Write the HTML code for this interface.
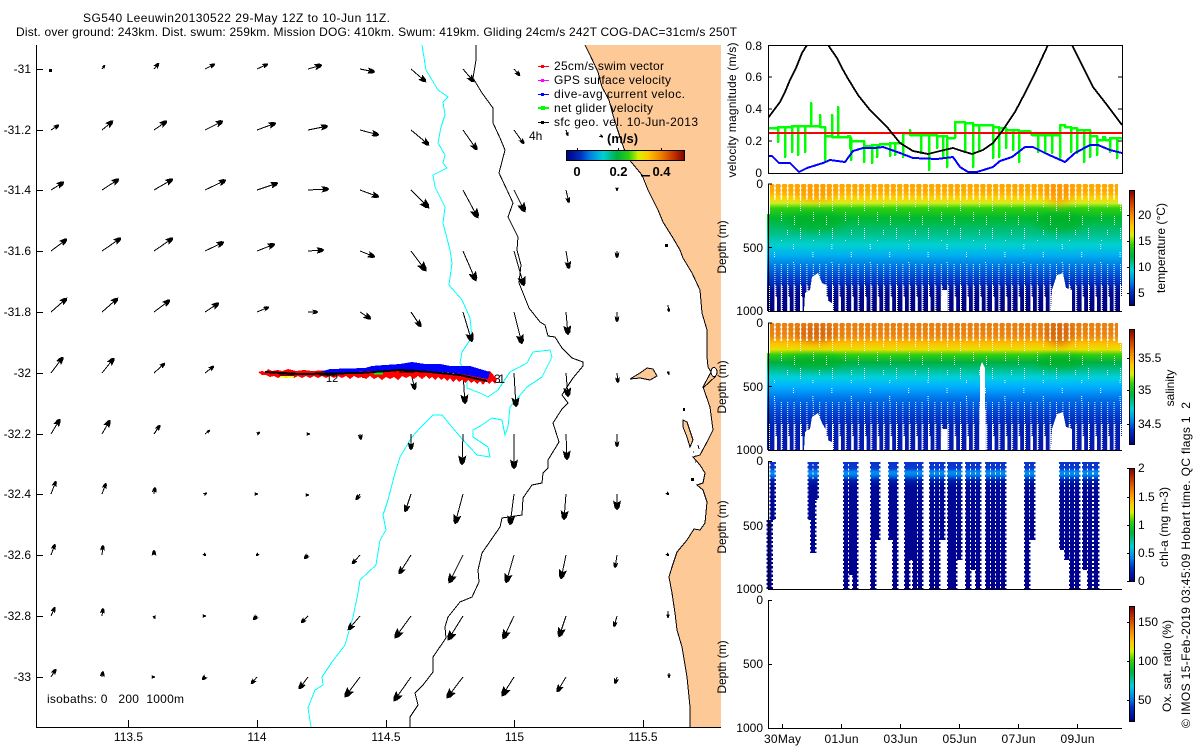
<!DOCTYPE html>
<html lang="en">
<head>
<meta charset="utf-8">
<title>SG540 Leeuwin20130522</title>
<style>
html,body{margin:0;padding:0;background:#fff;width:1200px;height:750px;overflow:hidden}
svg{display:block;shape-rendering:crispEdges}
text{font-family:"Liberation Sans",sans-serif;font-size:12px;fill:#000;white-space:pre}
.r{text-anchor:end}
.m{text-anchor:middle}
.b{font-weight:bold;font-size:14px}
.ln{fill:none;stroke:#000;stroke-width:1}
.ar path{fill:none;stroke:#000;stroke-width:1}
.al path{marker-end:url(#hl)}
.am path{marker-end:url(#hm)}
.as path{marker-end:url(#hs)}
.at path{marker-end:url(#ht)}
</style>
</head>
<body>
<svg width="1200" height="750" viewBox="0 0 1200 750" xmlns="http://www.w3.org/2000/svg">
<defs>
<marker id="hl" markerUnits="userSpaceOnUse" markerWidth="10" markerHeight="8" viewBox="0 0 10 8" refX="9.5" refY="4" orient="auto"><path d="M0 0L7 1.5L10 4L7 6.5L0 8L2.5 4z" fill="#000"/></marker>
<marker id="hm" markerUnits="userSpaceOnUse" markerWidth="8" markerHeight="7" viewBox="0 0 10 8" refX="9.5" refY="4" orient="auto"><path d="M0 0L7 1.5L10 4L7 6.5L0 8L2.5 4z" fill="#000"/></marker>
<marker id="hs" markerUnits="userSpaceOnUse" markerWidth="6" markerHeight="5.5" viewBox="0 0 10 8" refX="9.5" refY="4" orient="auto"><path d="M0 0L7 1.5L10 4L7 6.5L0 8L2.5 4z" fill="#000"/></marker>
<marker id="ht" markerUnits="userSpaceOnUse" markerWidth="4" markerHeight="4" viewBox="0 0 10 8" refX="9.5" refY="4" orient="auto"><path d="M0 0L7 1.5L10 4L7 6.5L0 8L2.5 4z" fill="#000"/></marker>

<linearGradient id="jetH" x1="0" y1="0" x2="1" y2="0">
<stop offset="0" stop-color="#00007f"/><stop offset=".12" stop-color="#0030c0"/><stop offset=".2" stop-color="#0080e8"/><stop offset=".31" stop-color="#00d0d8"/><stop offset=".43" stop-color="#00b040"/><stop offset=".53" stop-color="#30d010"/><stop offset=".61" stop-color="#d8f000"/><stop offset=".69" stop-color="#ffc800"/><stop offset=".8" stop-color="#f08000"/><stop offset=".9" stop-color="#c83800"/><stop offset="1" stop-color="#800000"/>
</linearGradient>
<linearGradient id="jetV" x1="0" y1="1" x2="0" y2="0">
<stop offset="0" stop-color="#00007f"/><stop offset=".12" stop-color="#0030c0"/><stop offset=".2" stop-color="#0080e8"/><stop offset=".31" stop-color="#00d0d8"/><stop offset=".43" stop-color="#00b040"/><stop offset=".53" stop-color="#30d010"/><stop offset=".61" stop-color="#d8f000"/><stop offset=".69" stop-color="#ffc800"/><stop offset=".8" stop-color="#f08000"/><stop offset=".9" stop-color="#c83800"/><stop offset="1" stop-color="#800000"/>
</linearGradient>
<linearGradient id="gT" gradientUnits="userSpaceOnUse" x1="0" y1="184" x2="0" y2="311">
<stop offset="0" stop-color="#ffa800"/><stop offset=".06" stop-color="#ffaa00"/><stop offset=".11" stop-color="#ffd000"/><stop offset=".15" stop-color="#d0f020"/><stop offset=".19" stop-color="#30d010"/><stop offset=".27" stop-color="#00b830"/><stop offset=".39" stop-color="#00c088"/><stop offset=".48" stop-color="#00d0d0"/><stop offset=".56" stop-color="#00b0f0"/><stop offset=".66" stop-color="#0070e0"/><stop offset=".77" stop-color="#0030c0"/><stop offset=".85" stop-color="#000a90"/><stop offset="1" stop-color="#00007f"/>
</linearGradient>
<linearGradient id="gS" gradientUnits="userSpaceOnUse" x1="0" y1="323" x2="0" y2="450">
<stop offset="0" stop-color="#e88010"/><stop offset=".1" stop-color="#ec8410"/><stop offset=".16" stop-color="#ffc000"/><stop offset=".21" stop-color="#e8e000"/><stop offset=".25" stop-color="#30d010"/><stop offset=".31" stop-color="#00b040"/><stop offset=".37" stop-color="#00c090"/><stop offset=".43" stop-color="#00d0e0"/><stop offset=".5" stop-color="#00b0ff"/><stop offset=".6" stop-color="#0070e8"/><stop offset=".71" stop-color="#0040d0"/><stop offset=".82" stop-color="#0020b0"/><stop offset="1" stop-color="#0818b0"/>
</linearGradient>
<linearGradient id="gC" gradientUnits="userSpaceOnUse" x1="0" y1="461" x2="0" y2="589">
<stop offset="0" stop-color="#0a30c8"/><stop offset=".06" stop-color="#0a3cd0"/><stop offset=".085" stop-color="#0090f0"/><stop offset=".11" stop-color="#0080e8"/><stop offset=".15" stop-color="#0020b0"/><stop offset=".2" stop-color="#000a96"/><stop offset="1" stop-color="#00008c"/>
</linearGradient>

<pattern id="pz" patternUnits="userSpaceOnUse" x="768.5" y="184" width="6.4" height="4.2"><path d="M-1.2 0H1.2L.3 2.1L1.2 4.2H-1.2L-.3 2.1zM5.2 0H7.6L6.7 2.1L7.6 4.2H5.2L6.1 2.1z" fill="#fff"/></pattern>
<pattern id="pz2" patternUnits="userSpaceOnUse" x="768.5" y="323" width="6.4" height="4.2"><path d="M-1.2 0H1.2L.3 2.1L1.2 4.2H-1.2L-.3 2.1zM5.2 0H7.6L6.7 2.1L7.6 4.2H5.2L6.1 2.1z" fill="#fff"/></pattern>
<pattern id="pd1" patternUnits="userSpaceOnUse" x="768" y="200" width="32" height="28"><path d="M0 0h1v1H0zM0 2h1v1H0zM0 4h1v1H0zM0 6h1v1H0zM0 8h1v1H0zM0 10h1v1H0zM13 12h1v1h-1zM13 14h1v1h-1zM13 16h1v1h-1zM13 18h1v1h-1zM13 20h1v1h-1zM19 2h1v1h-1zM19 4h1v1h-1zM19 6h1v1h-1zM26 16h1v1h-1zM26 18h1v1h-1zM26 20h1v1h-1zM26 22h1v1h-1zM26 24h1v1h-1z" fill="#fff"/></pattern>
<pattern id="pd2" patternUnits="userSpaceOnUse" x="774" y="0" width="38.4" height="18"><path d="M0 0h1v1H0zM0 2h1v1H0zM0 4h1v1H0zM19 10h1v1h-1zM19 12h1v1h-1zM19 14h1v1h-1z" fill="#fff"/></pattern>
<pattern id="pd3" patternUnits="userSpaceOnUse" x="768" y="0" width="6.4" height="2"><rect width="1" height="1" fill="#fff"/></pattern>
<pattern id="ps" patternUnits="userSpaceOnUse" x="768" y="0" width="6.4" height="2"><rect width="1" height="2" fill="#fff"/><rect x="1" width="1" height="1" fill="#fff"/></pattern>
<pattern id="pw" patternUnits="userSpaceOnUse" x="775" y="0" width="12.8" height="4"><rect width="2" height="4" fill="#fff"/></pattern>

<filter id="bl" x="-30%" y="-30%" width="160%" height="160%"><feGaussianBlur stdDeviation="4"/></filter>
<clipPath id="c1"><rect x="768" y="45" width="354" height="128"/></clipPath>
<clipPath id="c2"><rect x="768" y="184" width="354" height="127"/></clipPath>
<clipPath id="c3"><rect x="768" y="323" width="354" height="127"/></clipPath>
</defs>

<!-- MAP -->
<path d="M585 45L590 55L598 72L602 87L609 100L613 115L617 128L622 143L627 157L642 175L648 190L658 210L663 222L673 238L680 250L683 258L692 273L700 290L702 313L707 330L707 357L708 367L711 372L703 387L710 407L713 430L708 440L700 455L693 457L700 465L705 473L703 483L697 485L703 490L707 502L705 523L700 530L694 529L687 540L677 552L672 567L669 577L672 593L675 613L677 630L682 647L687 677L690 707L690 727H721V45Z" fill="#fdc997"/>
<path d="M585 45L590 55L598 72L602 87L609 100L613 115L617 128L622 143L627 157L642 175L648 190L658 210L663 222L673 238L680 250L683 258L692 273L700 290L702 313L707 330L707 357L708 367L711 372L703 387L710 407L713 430L708 440L700 455L693 457L700 465L705 473L703 483L697 485L703 490L707 502L705 523L700 530L694 529L687 540L677 552L672 567L669 577L672 593L675 613L677 630L682 647L687 677L690 707L690 727" class="ln"/>
<path d="M630 379L640 373L647 368L653 369L657 376L650 380L640 378Z" fill="#fdc997" stroke="#000"/>
<path d="M683 420L687 422L693 440L690 447L687 437L683 427Z" fill="#fdc997" stroke="#000"/>
<ellipse cx="714" cy="372" rx="3" ry="4.500" fill="#fff" stroke="#000"/>
<path d="M703 388L716 376" class="ln" stroke-width="2"/>
<path d="M698 445l1 4M693 452h1M695 456h1M695 462h1" class="ln"/>
<rect x="683" y="408" width="2" height="3"/>
<rect x="691" y="478" width="3" height="3"/>
<rect x="665" y="244" width="3" height="3"/>

<!-- isobaths -->
<path d="M476 45L476 60L473 78L482 93L493 108L493 123L500 138L505 150L499 173L507 190L513 203L508 217L518 237L517 250L521 265L519 283L529 308L540 322L545 325L548 336L555 337L562 348L572 358L583 362L583 366L573 378L567 387L562 395L568 403L562 409L553 423L559 442L548 460L548 468L543 473L542 483L532 485L523 498L522 515L502 518L500 527L482 553L478 570L479 582L472 597L460 602L448 617L445 627L446 638L433 657L433 672L423 685L415 693L418 705L410 717L410 727" fill="none" stroke="#000"/>
<path d="M422 45L426 70L438 90L448 97L443 102L445 115L441 127L438 143L445 155L443 163L447 168L433 175L435 187L445 207L443 223L450 250L452 263L449 285L462 300L470 318L472 338L470 340L462 352L460 363L467 373L467 388L480 393L488 397L498 390L510 372L527 363L533 352L550 350L552 357L542 377L527 387L510 407L508 427L505 435L502 420L492 418L482 425L473 430L473 437L488 447L490 457L477 455L463 440L452 427L442 415L433 415L420 428L412 437L400 457L395 473L388 500L383 515L386 530L380 540L376 565L360 580L358 593L353 617L345 645L332 662L322 677L323 685L315 690L308 708L311 727" fill="none" stroke="#00ffff"/>

<!-- arrows -->
<g class="ar at">
<path d="M102 69l3-4"/><path d="M566 130l2 6"/><path d="M257 434l3-2"/><path d="M308 434l2 0"/><path d="M205 494l2-1"/><path d="M257 494l1 0"/><path d="M308 495l1 0"/><path d="M205 555l1 1"/><path d="M257 555l-1 1"/><path d="M205 616l1 0"/><path d="M154 616l1 3"/><path d="M154 677l1 0"/><path d="M668 371l1 4"/><path d="M668 494l1 1"/><path d="M668 555l1 1"/><path d="M668 611l0 7"/><path d="M669 673l0 5"/><path d="M205 434l5-4"/><path d="M360 373l4 5"/><path d="M601 136l2 1"/><path d="M617 189l0 2"/><path d="M668 305l1 7"/>
</g>
<g class="ar as">
<path d="M154 69l5-6"/><path d="M205 69l10-5"/><path d="M257 69l11-5"/><path d="M514 69l6 7"/><path d="M51 130l8-5"/><path d="M514 130l10 14"/><path d="M566 190l3 13"/><path d="M617 251l0 7"/><path d="M617 312l0 10"/><path d="M205 373l9-7"/><path d="M617 373l1 10"/><path d="M154 434l6-9"/><path d="M360 434l1 6"/><path d="M617 434l0 13"/><path d="M154 494l1-7"/><path d="M360 494l-4 6"/><path d="M102 555l1-10"/><path d="M154 555l0-5"/><path d="M308 555l-4 4"/><path d="M360 555l-8 9"/><path d="M617 555l-2 13"/><path d="M51 616l4-9"/><path d="M102 616l1-8"/><path d="M257 616l-4 4"/><path d="M308 616l-7 7"/><path d="M617 616l-3 11"/><path d="M51 677l5-8"/><path d="M102 677l1-6"/><path d="M205 677l-3 3"/><path d="M257 677l-6 7"/><path d="M617 677l-2 7"/><path d="M51 555l4-11"/><path d="M102 494l4-11"/><path d="M51 494l5-13"/><path d="M154 373l11-10"/><path d="M257 312l12-5"/><path d="M308 312l10 0"/>
</g>
<g class="ar am">
<path d="M308 69l14-4"/><path d="M360 69l15 3"/><path d="M411 69l15 13"/><path d="M463 69l11 13"/><path d="M102 130l11-9"/><path d="M154 130l13-9"/><path d="M205 130l18-9"/><path d="M257 130l19-7"/><path d="M308 130l20-4"/><path d="M360 130l19 5"/><path d="M411 130l18 15"/><path d="M463 130l14 20"/><path d="M51 190l13-8"/><path d="M102 190l17-11"/><path d="M154 190l19-11"/><path d="M205 190l21-10"/><path d="M257 190l21-7"/><path d="M308 190l21-1"/><path d="M360 190l19 7"/><path d="M51 251l16-12"/><path d="M102 251l19-13"/><path d="M154 251l19-13"/><path d="M205 251l19-9"/><path d="M257 251l18-7"/><path d="M308 251l16-1"/><path d="M360 251l15 6"/><path d="M566 251l3 18"/><path d="M51 312l16-14"/><path d="M102 312l16-14"/><path d="M154 312l16-12"/><path d="M205 312l14-9"/><path d="M360 312l11 7"/><path d="M411 312l10 15"/><path d="M51 373l12-16"/><path d="M102 373l12-15"/><path d="M411 373l4 17"/><path d="M51 434l9-15"/><path d="M102 434l8-14"/><path d="M411 434l0 16"/><path d="M411 494l-6 18"/><path d="M411 555l-12 19"/><path d="M360 616l-12 14"/><path d="M308 677l-9 12"/><path d="M566 677l-9 15"/>
</g>
<g class="ar al">
<path d="M411 190l18 18"/><path d="M463 190l15 28"/><path d="M514 190l11 22"/><path d="M411 251l15 20"/><path d="M463 251l13 30"/><path d="M514 251l10 35"/><path d="M463 312l9 30"/><path d="M514 312l8 32"/><path d="M566 312l2 23"/><path d="M463 373l2 31"/><path d="M514 373l2 34"/><path d="M566 373l2 24"/><path d="M463 434l-1 31"/><path d="M514 434l0 35"/><path d="M566 434l1 26"/><path d="M463 494l-8 30"/><path d="M514 494l-4 31"/><path d="M566 494l-2 26"/><path d="M463 555l-14 28"/><path d="M514 555l-8 28"/><path d="M566 555l-5 24"/><path d="M411 616l-16 22"/><path d="M463 616l-15 24"/><path d="M514 616l-11 23"/><path d="M566 616l-7 21"/><path d="M360 677l-15 20"/><path d="M411 677l-17 24"/><path d="M463 677l-16 21"/><path d="M514 677l-12 19"/><path d="M617 494l0 16"/>
</g>
<rect x="49" y="69" width="3" height="3"/>

<!-- track -->
<path d="M258 372L262 371L265 372L268 369L272 371L278 370L282 371L288 369L296 371L304 370L312 371L330 370L350 370L370 370L385 371L405 370L420 371L445 373L465 374L476 371L484 372L490 371L497 379L495 384L492 381L489 384L486 381L483 385L480 381L477 384L474 381L471 383L468 380L465 383L462 380L459 382L456 379L453 382L450 378L447 381L444 378L441 380L438 377L435 380L432 377L429 379L426 376L422 379L418 376L414 379L410 376L406 378L402 376L398 380L394 377L390 379L386 377L382 380L378 377L374 379L370 376L366 379L362 377L358 378L354 376L350 379L346 376L342 378L338 376L334 378L330 376L326 378L322 376L318 378L314 376L310 378L306 376L302 378L298 376L294 378L290 376L286 378L282 376L278 378L274 376L270 377L266 375L262 375Z" fill="#f00"/>
<path d="M320 372L330 369L365 368L372 366L385 365L400 364L412 362L425 364L440 364L450 366L470 366L480 369L490 372L488 379L462 374L440 372L420 371L400 370L370 371L340 373Z" fill="#00f"/>
<path d="M288 373h20v1.500h-20z" fill="#0c0"/>
<path d="M280 376h14v1.500h-14z" fill="#ff0"/>
<rect x="374" y="372" width="9" height="2.500" fill="#0f0"/>
<path d="M265 372L300 374L360 373L400 370L430 372L460 375L487 381" fill="none" stroke="#000" stroke-width="2"/>
<path d="M280 373h14v2h-14zM320 373h14v2h-14zM400 370h14v2h-14z" fill="none" stroke="#000" stroke-width=".8"/>
<text x="494" y="383" textLength="11" lengthAdjust="spacing">31</text>
<text x="326" y="382" font-size="11" style="font-size:11px">12</text>

<!-- map axes -->
<path d="M36.500 45V727.500H721" class="ln"/>
<path d="M36 69.500h7M36 130.500h7M36 190.500h7M36 251.500h7M36 312.500h7M36 373.500h7M36 434.500h7M36 494.500h7M36 555.500h7M36 616.500h7M36 677.500h7M128.500 727v-7M257.500 727v-7M386.500 727v-7M514.500 727v-7M643.500 727v-7" class="ln"/>
<text class="r" x="31" y="73">-31</text>
<text class="r" x="31" y="134">-31.2</text>
<text class="r" x="31" y="194">-31.4</text>
<text class="r" x="31" y="255">-31.6</text>
<text class="r" x="31" y="316">-31.8</text>
<text class="r" x="31" y="377">-32</text>
<text class="r" x="31" y="438">-32.2</text>
<text class="r" x="31" y="498">-32.4</text>
<text class="r" x="31" y="559">-32.6</text>
<text class="r" x="31" y="620">-32.8</text>
<text class="r" x="31" y="681">-33</text>
<text class="m" x="128.500" y="741">113.5</text>
<text class="m" x="257" y="741">114</text>
<text class="m" x="386" y="741">114.5</text>
<text class="m" x="514.500" y="741">115</text>
<text class="m" x="643" y="741">115.5</text>
<text x="47" y="703" textLength="137" lengthAdjust="spacing">isobaths: 0   200  1000m</text>

<!-- titles -->
<text x="83" y="22" textLength="307" lengthAdjust="spacing">SG540 Leeuwin20130522 29-May 12Z to 10-Jun 11Z.</text>
<text x="16" y="36" textLength="721" lengthAdjust="spacing">Dist. over ground: 243km. Dist. swum: 259km. Mission DOG: 410km. Swum: 419km. Gliding 24cm/s 242T COG-DAC=31cm/s 250T</text>

<!-- legend -->
<path d="M538 66.500h11" stroke="#f00" fill="none"/><rect x="541" y="65" width="3" height="3" fill="#f00"/>
<path d="M538 80.500h11" stroke="#f0f" fill="none"/><rect x="541" y="79" width="3" height="3" fill="#f0f"/>
<path d="M538 94.500h11" stroke="#00f" fill="none"/><rect x="541" y="93" width="3" height="3" fill="#00f"/>
<path d="M538 108h11" stroke="#0f0" stroke-width="2" fill="none"/><rect x="541" y="106" width="4" height="4" fill="#0f0"/>
<path d="M538 122.500h11" stroke="#000" fill="none"/><rect x="541" y="121" width="3" height="3"/>
<text x="554" y="70" textLength="110" lengthAdjust="spacing">25cm/s swim vector</text>
<text x="554" y="84" textLength="117" lengthAdjust="spacing">GPS surface velocity</text>
<text x="554" y="98" textLength="131" lengthAdjust="spacing">dive-avg current veloc.</text>
<text x="554" y="112" textLength="99" lengthAdjust="spacing">net glider velocity</text>
<text x="554" y="126" textLength="144" lengthAdjust="spacing">sfc geo. vel. 10-Jun-2013</text>
<text x="529" y="140">4h</text>
<text class="b" x="607" y="143" style="font-size:13px">(m/s)</text>
<rect x="566.500" y="150.500" width="118" height="10" fill="url(#jetH)" stroke="#000"/>
<path d="M577.500 150v-2M618.500 150v-2M661.500 150v-2" class="ln"/>
<text class="m" x="577" y="176" style="font-weight:bold;font-size:13px">0</text>
<text class="m" x="618.500" y="176" style="font-weight:bold;font-size:13px">0.2</text>
<text class="m" x="661.500" y="176" style="font-weight:bold;font-size:13px">0.4</text>
<rect x="641" y="175" width="9" height="1.500"/>

<!-- PANEL 1 -->
<g clip-path="url(#c1)" stroke-linejoin="round">
<path d="M768 128H778V142V127H785V157V127H792V152V126H798V155V126H805V152V126H811V103V126H820V115V127H825V160V136H832V115V137H838V107V137H848V136H850V148V138H851V160V141H860V141H864V162V146H868H872V163V145H877V157V145H880V144H890V156V143H895V155V143H900H903V157V133H905H910V130V135H921V153V135H929V170V135H937V148V136H943V157V136H947V167V138H950H955V122H965V152V123H973V167V125H979V150V125H993V158V127H999V157V128H1005H1006V148V130H1013V150V130H1019V162V131H1030V131L1032 135H1038V152V135H1045V153V135H1052V153V135H1060V158V125H1065V127H1071V152V128H1077V153V130H1084V162V130H1090V157V136H1097V155V140H1103V137H1105V140H1110V152V138H1117V158V138H1122" fill="none" stroke="#0f0" stroke-width="2.500"/>
<path d="M768 133H1122" stroke="#f00" stroke-width="2" fill="none"/>
<path d="M768 118L774 110L780 102L785 92L790 80L796 68L802 53L807 45L828 45L837 58L842 68L847 77L858 95L870 110L887 127L900 143L913 151L928 154L940 151L953 148L962 151L972 154L983 150L993 143L1003 130L1015 112L1025 93L1035 73L1048 45L1072 45L1083 67L1093 87L1107 105L1122 125" fill="none" stroke="#000" stroke-width="1.800"/>
<path d="M768 156L772 156L779 163L790 163L799 172L807 168L823 163L830 160L845 162L853 151L863 148L875 148L883 147L900 153L913 158L937 159L953 157L960 167L968 172L977 172L993 167L1000 161L1012 157L1025 147L1033 147L1047 154L1065 162L1075 153L1090 145L1098 145L1110 150L1122 153" fill="none" stroke="#00f" stroke-width="2"/>
</g>
<rect x="768.500" y="45.500" width="354" height="128" fill="none" stroke="#000"/>
<path d="M768 77h4M768 109h4M768 141h4M1122 77h-4M1122 109h-4M1122 141h-4" class="ln"/>
<text class="r" x="762" y="50">0.8</text>
<text class="r" x="762" y="81">0.6</text>
<text class="r" x="762" y="113">0.4</text>
<text class="r" x="762" y="145">0.2</text>
<text class="r" x="762" y="177">0</text>
<text class="m" transform="translate(736,110) rotate(-90)" textLength="135" lengthAdjust="spacing">velocity magnitude (m/s)</text>

<!-- PANEL 2 temperature -->
<rect x="767" y="184" width="355" height="127" fill="url(#gT)"/>
<g clip-path="url(#c2)">
<g filter="url(#bl)" opacity=".7">
<ellipse cx="816" cy="192" rx="20" ry="9" fill="#ff9800"/>
<ellipse cx="1059" cy="192" rx="14" ry="12" fill="#ff9000"/>
<ellipse cx="815" cy="222" rx="28" ry="9" fill="#00b020"/>
<ellipse cx="1060" cy="222" rx="24" ry="10" fill="#00b020"/>
</g>
</g>
<rect x="767" y="184" width="356" height="16" fill="url(#pz)"/>
<rect x="767" y="200" width="355" height="41" fill="url(#pd1)"/>
<rect x="767" y="241" width="355" height="22" fill="url(#pd2)"/>
<rect x="767" y="263" width="355" height="22" fill="url(#pd3)"/>
<rect x="767" y="285" width="355" height="26" fill="url(#ps)"/>
<rect x="767" y="297" width="355" height="14" fill="url(#pw)"/>
<rect x="1118" y="184" width="6" height="20" fill="#fff"/>
<rect x="767" y="184" width="3" height="30" fill="#fff"/>
<path d="M804 311L805 293L810 290L812 277L818 273L822 283L826 285L827 300L832 303L832 311ZM942 311V290H947V311ZM1051 311L1052 290L1057 275L1063 273L1066 288L1072 290L1072 311Z" fill="#fff"/>
<path d="M768.500 184V311.500H1122M768 184h4M768 247.500h4" class="ln"/>
<text class="r" x="763" y="188">0</text>
<text class="r" x="763" y="252">500</text>
<text class="r" x="763" y="315">1000</text>
<text class="m" transform="translate(726,247) rotate(-90)">Depth (m)</text>
<rect x="1129.500" y="190.500" width="5" height="115" fill="url(#jetV)" stroke="#000"/>
<path d="M1127 215.500h2M1127 241.500h2M1127 267.500h2M1127 293.500h2" class="ln"/>
<text x="1138" y="219">20</text>
<text x="1138" y="245">15</text>
<text x="1138" y="271">10</text>
<text x="1138" y="297">5</text>
<text class="m" transform="translate(1165,248) rotate(-90)" textLength="90" lengthAdjust="spacing">temperature (°C)</text>

<!-- PANEL 3 salinity -->
<rect x="767" y="323" width="355" height="127" fill="url(#gS)"/>
<g clip-path="url(#c3)">
<g filter="url(#bl)" opacity=".7">
<ellipse cx="816" cy="333" rx="20" ry="9" fill="#d06010"/>
<ellipse cx="1059" cy="333" rx="14" ry="12" fill="#d06010"/>
<ellipse cx="815" cy="362" rx="28" ry="7" fill="#00b020"/>
<ellipse cx="1060" cy="362" rx="24" ry="7" fill="#00b020"/>
</g>
</g>
<rect x="767" y="323" width="356" height="18" fill="url(#pz2)"/>
<rect x="767" y="341" width="355" height="39" fill="url(#pd1)"/>
<rect x="767" y="380" width="355" height="22" fill="url(#pd2)"/>
<rect x="767" y="402" width="355" height="22" fill="url(#pd3)"/>
<rect x="767" y="424" width="355" height="26" fill="url(#ps)"/>
<rect x="767" y="436" width="355" height="14" fill="url(#pw)"/>
<rect x="1118" y="323" width="6" height="20" fill="#fff"/>
<rect x="767" y="323" width="3" height="30" fill="#fff"/>
<path d="M804 450L805 432L810 429L812 417L818 413L822 423L826 430L827 440L832 442L832 450ZM942 450V429H947V450ZM1051 450L1052 429L1057 414L1063 412L1066 427L1072 429L1072 450Z" fill="#fff"/>
<path d="M979.500 450L980 368L982 362L985 368L985.500 450Z" fill="#fff"/>
<path d="M768.500 323V450.500H1122M768 323h4M768 386.500h4" class="ln"/>
<text class="r" x="763" y="327">0</text>
<text class="r" x="763" y="391">500</text>
<text class="r" x="763" y="454">1000</text>
<text class="m" transform="translate(726,387) rotate(-90)">Depth (m)</text>
<rect x="1129.500" y="329.500" width="5" height="115" fill="url(#jetV)" stroke="#000"/>
<path d="M1127 358.500h2M1127 390.500h2M1127 424.500h2" class="ln"/>
<text x="1138" y="362">35.5</text>
<text x="1138" y="394">35</text>
<text x="1138" y="428">34.5</text>
<text class="m" transform="translate(1174,388) rotate(-90)">salinity</text>

<!-- PANEL 4 chl-a -->
<g stroke="url(#gC)" fill="none">
<g stroke-width="4">
<path d="M769.500 520V589M772.500 462V520M810.500 462V520M815.500 462V500M813 480V553M846 462V589M851 462V575M855 462V589M873 462V589M877 462V540M891 462V540M895 462V589M907 462V589M911 462V560M915 462V589M920 462V589M932 462V589M937 462V589M942 462V540M950 462V589M954 462V589M959 462V560M968 462V589M973 462V570M978 462V589M988 462V589M993 462V589M998 462V589M1003 462V589M1027 462V589M1032 462V540M1062 462V550M1067 462V560M1072 462V589M1077 462V589M1085 462V570M1090 462V589M1096 462V589"/>
</g>
<g stroke-width="6.500" stroke-dasharray="2.200 2">
<path d="M769.500 520V589M772.500 462V520M810.500 462V520M815.500 462V500M813 480V553M846 462V589M851 462V575M855 462V589M873 462V589M877 462V540M891 462V540M895 462V589M907 462V589M911 462V560M915 462V589M920 462V589M932 462V589M937 462V589M942 462V540M950 462V589M954 462V589M959 462V560M968 462V589M973 462V570M978 462V589M988 462V589M993 462V589M998 462V589M1003 462V589M1027 462V589M1032 462V540M1062 462V550M1067 462V560M1072 462V589M1077 462V589M1085 462V570M1090 462V589M1096 462V589"/>
</g>
</g>
<path d="M768.500 461V589.500H1122M768 461.500h4M768 525.500h4" class="ln"/>
<text class="r" x="763" y="465">0</text>
<text class="r" x="763" y="530">500</text>
<text class="r" x="763" y="593">1000</text>
<text class="m" transform="translate(726,527) rotate(-90)">Depth (m)</text>
<rect x="1129.500" y="468.500" width="5" height="113" fill="url(#jetV)" stroke="#000"/>
<path d="M1127 468.500h2M1127 497.500h2M1127 525.500h2M1127 553.500h2M1127 581.500h2" class="ln"/>
<text x="1138" y="472">2</text>
<text x="1138" y="501">1.5</text>
<text x="1138" y="529">1</text>
<text x="1138" y="557">0.5</text>
<text x="1138" y="585">0</text>
<text class="m" transform="translate(1168,527) rotate(-90)" textLength="80" lengthAdjust="spacing">chl-a (mg m-3)</text>

<!-- PANEL 5 oxygen -->
<path d="M768.500 600V728.500H1122M768 600.500h4M768 664.500h4M782.500 728v-4M841.500 728v-4M900.500 728v-4M959.500 728v-4M1018.500 728v-4M1077.500 728v-4" class="ln"/>
<text class="r" x="763" y="604">0</text>
<text class="r" x="763" y="668">500</text>
<text class="r" x="763" y="732">1000</text>
<text class="m" transform="translate(726,667) rotate(-90)">Depth (m)</text>
<text class="m" x="782.500" y="743" textLength="37" lengthAdjust="spacing">30May</text>
<text class="m" x="841.500" y="743" textLength="34" lengthAdjust="spacing">01Jun</text>
<text class="m" x="900.500" y="743" textLength="34" lengthAdjust="spacing">03Jun</text>
<text class="m" x="959.500" y="743" textLength="34" lengthAdjust="spacing">05Jun</text>
<text class="m" x="1018.500" y="743" textLength="34" lengthAdjust="spacing">07Jun</text>
<text class="m" x="1077.500" y="743" textLength="34" lengthAdjust="spacing">09Jun</text>
<rect x="1129.500" y="606.500" width="5" height="115" fill="url(#jetV)" stroke="#000"/>
<path d="M1127 622.500h2M1127 661.500h2M1127 700.500h2" class="ln"/>
<text x="1138" y="626">150</text>
<text x="1138" y="665">100</text>
<text x="1138" y="704">50</text>
<text class="m" transform="translate(1171,666) rotate(-90)" textLength="92" lengthAdjust="spacing">Ox. sat. ratio (%)</text>

<text transform="translate(1190,728) rotate(-90)" textLength="326" lengthAdjust="spacing">© IMOS 15-Feb-2019 03:45:09 Hobart time. QC flags 1  2</text>
</svg>
</body>
</html>
